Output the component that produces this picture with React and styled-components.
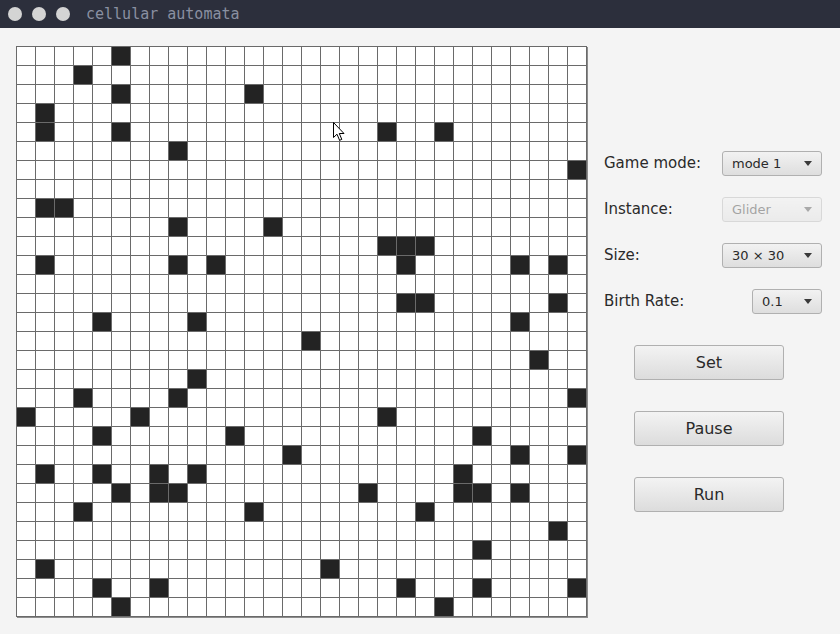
import React from 'react'
import styled, { createGlobalStyle } from 'styled-components'

const ALIVE = [
  [0, 5], [1, 3], [2, 5], [2, 12], [3, 1], [4, 1], [4, 5], [4, 19], [4, 22], [5, 8],
  [6, 29], [8, 1], [8, 2], [9, 8], [9, 13], [10, 19], [10, 20], [10, 21], [11, 1], [11, 8],
  [11, 10], [11, 20], [11, 26], [11, 28], [13, 20], [13, 21], [13, 28], [14, 4], [14, 9], [14, 26],
  [15, 15], [16, 27], [17, 9], [18, 3], [18, 8], [18, 29], [19, 0], [19, 6], [19, 19], [20, 4],
  [20, 11], [20, 24], [21, 14], [21, 26], [21, 29], [22, 1], [22, 4], [22, 7], [22, 9], [22, 23],
  [23, 5], [23, 7], [23, 8], [23, 18], [23, 23], [23, 24], [23, 26], [24, 3], [24, 12], [24, 21],
  [25, 28], [26, 24], [27, 1], [27, 16], [28, 4], [28, 7], [28, 20], [28, 24], [28, 29], [29, 5],
  [29, 22],
]

const SIZE = 30
const alive = new Set(ALIVE.map(([r, c]) => r * SIZE + c))

const GlobalStyle = createGlobalStyle`
  html, body {
    margin: 0;
    padding: 0;
    background: #f4f4f4;
  }
  body {
    font-family: "DejaVu Sans", "Liberation Sans", sans-serif;
  }
`

const Window = styled.div`
  width: 840px;
  height: 634px;
  background: #f4f4f4;
  overflow: hidden;
`

const TitleBar = styled.div`
  height: 28px;
  background: #2c2f3c;
  display: flex;
  align-items: center;
  padding-left: 8px;
  gap: 10px;
`

const Dot = styled.span`
  width: 14px;
  height: 14px;
  border-radius: 50%;
  background: #d4d4d4;
`

const Title = styled.span`
  margin-left: 6px;
  font-family: "DejaVu Sans Mono", "Liberation Mono", monospace;
  font-size: 15px;
  color: #8a90a1;
`

const Content = styled.div`
  display: flex;
  padding: 18px 0 0 16px;
`

const Board = styled.div`
  position: relative;
  display: grid;
  grid-template-columns: repeat(${SIZE}, 18px);
  grid-auto-rows: 18px;
  gap: 1px;
  padding: 1px;
  background: #6a6a6a;
  box-shadow: 1px 1px 0 #8c8c8c;
`

const Cell = styled.div`
  background: ${p => (p.$on ? '#232323' : '#ffffff')};
`

const Cursor = styled.svg`
  position: absolute;
  left: 317px;
  top: 76px;
`

const Panel = styled.div`
  width: 218px;
  margin-left: 17px;
  padding-top: 105px;
  display: flex;
  flex-direction: column;
`

const Row = styled.div`
  height: 25px;
  display: flex;
  align-items: center;
  justify-content: space-between;
  margin-bottom: 21px;
`

const Label = styled.span`
  font-size: 15px;
  color: #2a2a2a;
  margin-top: -2px;
`

const Combo = styled.div`
  box-sizing: border-box;
  width: ${p => p.$w}px;
  height: 25px;
  display: flex;
  align-items: center;
  justify-content: space-between;
  padding: 0 9px 0 9px;
  border: 1px solid #b0b0b0;
  border-radius: 3px;
  background: linear-gradient(to bottom, #f2f2f2, #dedede);
  font-size: 13px;
  color: #2a2a2a;
  opacity: ${p => (p.$disabled ? 0.4 : 1)};
`

const Arrow = styled.span`
  width: 0;
  height: 0;
  border-left: 4px solid transparent;
  border-right: 4px solid transparent;
  border-top: 5px solid #3a3a3a;
`

const Buttons = styled.div`
  display: flex;
  flex-direction: column;
  gap: 31px;
  margin-top: 10px;
  margin-left: 30px;
`

const Button = styled.button`
  box-sizing: border-box;
  width: 150px;
  height: 35px;
  border: 1px solid #b0b0b0;
  border-radius: 3px;
  background: linear-gradient(to bottom, #f3f3f3, #dcdcdc);
  font-family: "DejaVu Sans", "Liberation Sans", sans-serif;
  font-size: 16px;
  color: #2a2a2a;
  padding: 0;
`

const Select = ({ value, width, disabled }) => (
  <Combo $w={width} $disabled={disabled}>
    <span>{value}</span>
    <Arrow />
  </Combo>
)

export default function App() {
  const cells = []
  for (let i = 0; i < SIZE * SIZE; i++) {
    cells.push(<Cell key={i} $on={alive.has(i)} />)
  }

  return (
    <Window>
      <GlobalStyle />
      <TitleBar>
        <Dot />
        <Dot />
        <Dot />
        <Title>cellular automata</Title>
      </TitleBar>
      <Content>
        <Board>
          {cells}
          <Cursor width="13" height="20" viewBox="0 0 13 20">
            <path d="M0.5 0.5 L0.5 15.5 L4 12.2 L6.6 18.3 L8.8 17.4 L6.3 11.5 L11 11.5 Z" fill="#fff" stroke="#000" strokeWidth="1" strokeLinejoin="round" />
          </Cursor>
        </Board>
        <Panel>
          <Row>
            <Label>Game mode:</Label>
            <Select value="mode 1" width={100} />
          </Row>
          <Row>
            <Label>Instance:</Label>
            <Select value="Glider" width={100} disabled />
          </Row>
          <Row>
            <Label>Size:</Label>
            <Select value="30 × 30" width={100} />
          </Row>
          <Row>
            <Label>Birth Rate:</Label>
            <Select value="0.1" width={70} />
          </Row>
          <Buttons>
            <Button>Set</Button>
            <Button>Pause</Button>
            <Button>Run</Button>
          </Buttons>
        </Panel>
      </Content>
    </Window>
  )
}
